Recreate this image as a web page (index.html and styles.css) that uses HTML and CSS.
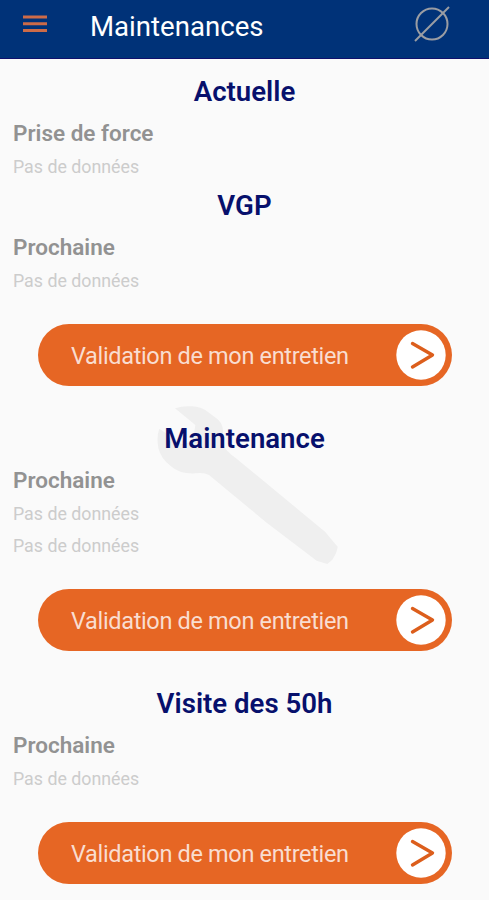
FILE: index.html
```html
<!DOCTYPE html>
<html lang="fr">
<head>
<meta charset="utf-8">
<title>Maintenances</title>
<link rel="stylesheet" href="styles.css">
</head>
<body>
<header class="bar">
  <svg class="menu" viewBox="0 0 24 18"><path d="M0 2h24M0 8.7h24M0 15.4h24"/></svg>
  <h1>Maintenances</h1>
  <svg class="empty" viewBox="0 0 38 38"><circle cx="19" cy="19" r="15.500"/><path d="M2 36L36 2"/></svg>
</header>
<main>
  <svg class="wrench" viewBox="0 0 660 570"><path d="M105 55Q128 47 155 49Q185 50 207 68L233 88Q248 102 249 121L248 163Q258 184 287 204L555 425L593 470Q592 485 577 509L562 522L530 512L380 398L207 255Q192 246 165 250Q118 252 91 227Q63 206 55 174Q49 139 58 116L125 162L158 155L166 105Z"/></svg>
  <section>
    <h2>Actuelle</h2>
    <h3>Prise de force</h3>
    <p>Pas de données</p>
  </section>
  <section class="vgp">
    <h2>VGP</h2>
    <h3>Prochaine</h3>
    <p>Pas de données</p>
    <button><span>Validation de mon entretien</span><svg viewBox="0 0 50 50"><circle cx="25" cy="25" r="24.700"/><path d="M16.500 13.500L36.500 25L16.500 37"/></svg></button>
  </section>
  <section class="maint">
    <h2>Maintenance</h2>
    <h3>Prochaine</h3>
    <p>Pas de données</p>
    <p>Pas de données</p>
    <button><span>Validation de mon entretien</span><svg viewBox="0 0 50 50"><circle cx="25" cy="25" r="24.700"/><path d="M16.500 13.500L36.500 25L16.500 37"/></svg></button>
  </section>
  <section class="visit">
    <h2>Visite des 50h</h2>
    <h3>Prochaine</h3>
    <p>Pas de données</p>
    <button><span>Validation de mon entretien</span><svg viewBox="0 0 50 50"><circle cx="25" cy="25" r="24.700"/><path d="M16.500 13.500L36.500 25L16.500 37"/></svg></button>
  </section>
</main>
</body>
</html>
```
FILE: styles.css
```css
*{box-sizing:border-box}
body{margin:0;height:900px;overflow:hidden;background:#fafafa;font-family:Roboto,sans-serif}
.bar{height:59px;background:#003278;border-bottom:1px solid #10106c;display:flex;align-items:flex-start;color:#fff}
.menu{width:24px;height:18px;margin:15px 0 0 23px;fill:none;stroke:#cc6b48;stroke-width:3}
h1{margin:11px 0 0 43px;font-size:27.6px;line-height:32px;font-weight:400}
.empty{width:38px;height:38px;margin:4.5px 38px 0 auto;fill:none;stroke:#9a9da3;stroke-width:2}
main{position:relative}
.wrench{position:absolute;left:140px;top:331px;width:220px;height:190px;fill:#efefef}
section{position:relative;padding-top:15px}
h2{margin:0;text-align:center;font-size:27.6px;line-height:36px;font-weight:600;color:#07106c}
h3{margin:7px 0 0 13px;font-size:22.5px;line-height:32px;font-weight:600;color:#929292}
p{margin:3px 0 0 13px;font-size:17.8px;line-height:30px;color:#ccc}
p + p{margin-top:2px}
.vgp{padding-top:6px}
.maint,.visit{padding-top:35px}
button{display:flex;align-items:center;justify-content:space-between;width:414px;height:62px;margin:28px 0 0 38px;padding:0 6px 0 33px;border:0;border-radius:31px;background:#e66624;color:#f9ddd0;font:400 23.5px Roboto,sans-serif;letter-spacing:-.34px}
button span{padding-top:2px}
button svg{width:50px;height:50px;fill:#fff}
button path{fill:none;stroke:#dc5e1c;stroke-width:3.4;stroke-linecap:round;stroke-linejoin:round}
```
